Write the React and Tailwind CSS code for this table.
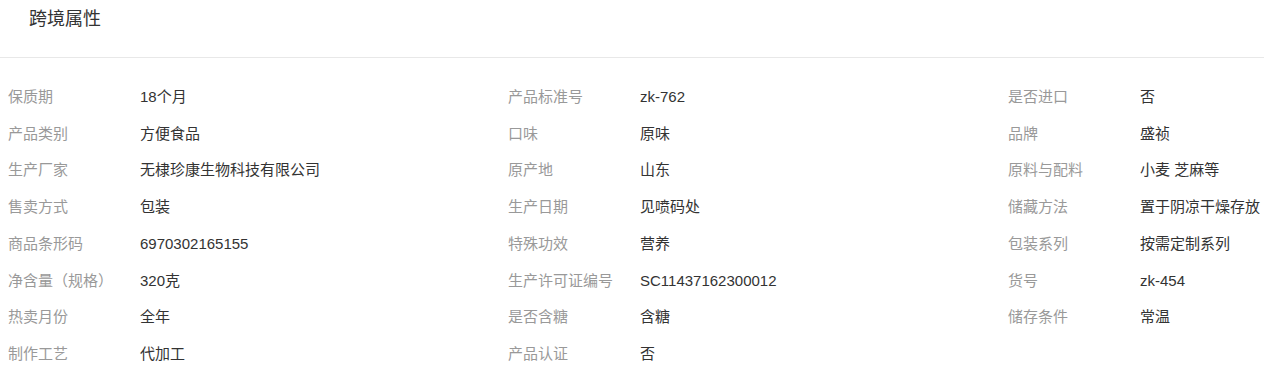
const rows = [
  [['保质期', '18个月'], ['产品标准号', 'zk-762'], ['是否进口', '否']],
  [['产品类别', '方便食品'], ['口味', '原味'], ['品牌', '盛祯']],
  [['生产厂家', '无棣珍康生物科技有限公司'], ['原产地', '山东'], ['原料与配料', '小麦 芝麻等']],
  [['售卖方式', '包装'], ['生产日期', '见喷码处'], ['储藏方法', '置于阴凉干燥存放']],
  [['商品条形码', '6970302165155'], ['特殊功效', '营养'], ['包装系列', '按需定制系列']],
  [['净含量（规格）', '320克'], ['生产许可证编号', 'SC11437162300012'], ['货号', 'zk-454']],
  [['热卖月份', '全年'], ['是否含糖', '含糖'], ['储存条件', '常温']],
  [['制作工艺', '代加工'], ['产品认证', '否']],
]

function Attr({ label, value }) {
  return (
    <div className="flex items-center whitespace-nowrap">
      <span className="w-[132px] shrink-0 text-[#999]">{label}</span>
      <span className="text-[#333]">{value}</span>
    </div>
  )
}

export default function App() {
  return (
    <div
      className="w-[1264px] h-[368px] bg-white overflow-hidden text-[15px]"
      style={{ fontFamily: '"Liberation Sans", "Noto Sans CJK SC", sans-serif' }}
    >
      <div className="h-[58px] border-b border-[#e8e8e8] pl-[29px] pt-[7px]">
        <h2 className="text-[18px] leading-[24px] text-[#333]">跨境属性</h2>
      </div>
      <div className="grid grid-cols-[500px_500px_1fr] auto-rows-[36.7px] pl-[8px] pt-[21px]">
        {rows.map((row, i) =>
          [0, 1, 2].map((j) =>
            row[j] ? <Attr key={i + '-' + j} label={row[j][0]} value={row[j][1]} /> : <div key={i + '-' + j} />
          )
        )}
      </div>
    </div>
  )
}
